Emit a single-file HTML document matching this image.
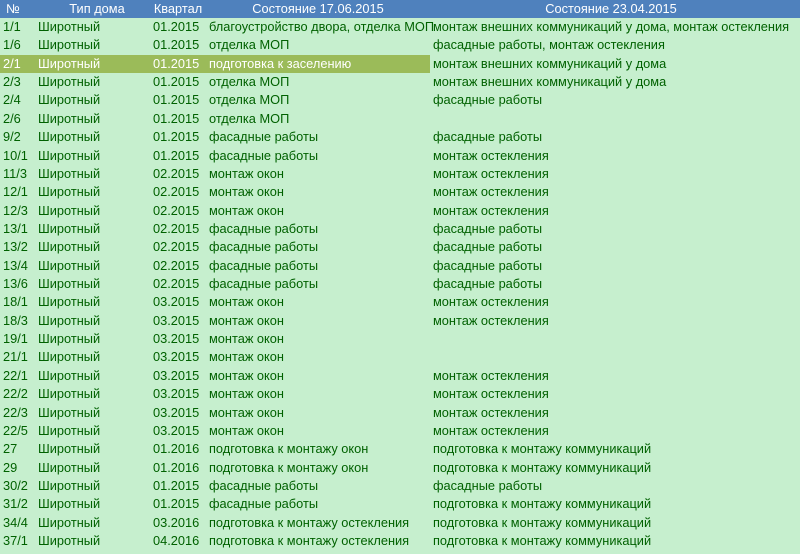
<!DOCTYPE html><html><head><meta charset="utf-8"><style>
body{margin:0;width:800px;height:554px;background:#c6efce;font-family:"Liberation Sans",sans-serif;font-size:12.8px;overflow:hidden;position:relative}
.h{position:absolute;left:0;top:0;width:800px;height:18px;background:#4f81bd;color:#fff}
.h span{position:absolute;top:1px;transform:translateX(-50%);white-space:nowrap}
.r{position:relative;height:18.36px;color:#006100;white-space:nowrap}
.r span{position:absolute;top:1px}
.c1{left:3px}.c2{left:38px}.c3{left:153px}.c4{left:209px}.c5{left:433px}
.hl{position:absolute;left:0;top:0;width:430px;height:18px;background:#9bbb59}
.hl~span{color:#fff}
#b{position:absolute;top:18px;left:0;width:800px}
</style></head><body>
<div class="h"><span style="left:13px">№</span><span style="left:97px">Тип дома</span><span style="left:178px">Квартал</span><span style="left:318px">Состояние 17.06.2015</span><span style="left:611px">Состояние 23.04.2015</span></div>
<div id="b">
<div class="r"><span class="c1">1/1</span><span class="c2">Широтный</span><span class="c3">01.2015</span><span class="c4">благоустройство двора, отделка МОП</span><span class="c5">монтаж внешних коммуникаций у дома, монтаж остекления</span></div>
<div class="r"><span class="c1">1/6</span><span class="c2">Широтный</span><span class="c3">01.2015</span><span class="c4">отделка МОП</span><span class="c5">фасадные работы, монтаж остекления</span></div>
<div class="r"><div class="hl"></div><span class="c1">2/1</span><span class="c2">Широтный</span><span class="c3">01.2015</span><span class="c4">подготовка к заселению</span><span class="c5" style="color:#006100">монтаж внешних коммуникаций у дома</span></div>
<div class="r"><span class="c1">2/3</span><span class="c2">Широтный</span><span class="c3">01.2015</span><span class="c4">отделка МОП</span><span class="c5">монтаж внешних коммуникаций у дома</span></div>
<div class="r"><span class="c1">2/4</span><span class="c2">Широтный</span><span class="c3">01.2015</span><span class="c4">отделка МОП</span><span class="c5">фасадные работы</span></div>
<div class="r"><span class="c1">2/6</span><span class="c2">Широтный</span><span class="c3">01.2015</span><span class="c4">отделка МОП</span></div>
<div class="r"><span class="c1">9/2</span><span class="c2">Широтный</span><span class="c3">01.2015</span><span class="c4">фасадные работы</span><span class="c5">фасадные работы</span></div>
<div class="r"><span class="c1">10/1</span><span class="c2">Широтный</span><span class="c3">01.2015</span><span class="c4">фасадные работы</span><span class="c5">монтаж остекления</span></div>
<div class="r"><span class="c1">11/3</span><span class="c2">Широтный</span><span class="c3">02.2015</span><span class="c4">монтаж окон</span><span class="c5">монтаж остекления</span></div>
<div class="r"><span class="c1">12/1</span><span class="c2">Широтный</span><span class="c3">02.2015</span><span class="c4">монтаж окон</span><span class="c5">монтаж остекления</span></div>
<div class="r"><span class="c1">12/3</span><span class="c2">Широтный</span><span class="c3">02.2015</span><span class="c4">монтаж окон</span><span class="c5">монтаж остекления</span></div>
<div class="r"><span class="c1">13/1</span><span class="c2">Широтный</span><span class="c3">02.2015</span><span class="c4">фасадные работы</span><span class="c5">фасадные работы</span></div>
<div class="r"><span class="c1">13/2</span><span class="c2">Широтный</span><span class="c3">02.2015</span><span class="c4">фасадные работы</span><span class="c5">фасадные работы</span></div>
<div class="r"><span class="c1">13/4</span><span class="c2">Широтный</span><span class="c3">02.2015</span><span class="c4">фасадные работы</span><span class="c5">фасадные работы</span></div>
<div class="r"><span class="c1">13/6</span><span class="c2">Широтный</span><span class="c3">02.2015</span><span class="c4">фасадные работы</span><span class="c5">фасадные работы</span></div>
<div class="r"><span class="c1">18/1</span><span class="c2">Широтный</span><span class="c3">03.2015</span><span class="c4">монтаж окон</span><span class="c5">монтаж остекления</span></div>
<div class="r"><span class="c1">18/3</span><span class="c2">Широтный</span><span class="c3">03.2015</span><span class="c4">монтаж окон</span><span class="c5">монтаж остекления</span></div>
<div class="r"><span class="c1">19/1</span><span class="c2">Широтный</span><span class="c3">03.2015</span><span class="c4">монтаж окон</span></div>
<div class="r"><span class="c1">21/1</span><span class="c2">Широтный</span><span class="c3">03.2015</span><span class="c4">монтаж окон</span></div>
<div class="r"><span class="c1">22/1</span><span class="c2">Широтный</span><span class="c3">03.2015</span><span class="c4">монтаж окон</span><span class="c5">монтаж остекления</span></div>
<div class="r"><span class="c1">22/2</span><span class="c2">Широтный</span><span class="c3">03.2015</span><span class="c4">монтаж окон</span><span class="c5">монтаж остекления</span></div>
<div class="r"><span class="c1">22/3</span><span class="c2">Широтный</span><span class="c3">03.2015</span><span class="c4">монтаж окон</span><span class="c5">монтаж остекления</span></div>
<div class="r"><span class="c1">22/5</span><span class="c2">Широтный</span><span class="c3">03.2015</span><span class="c4">монтаж окон</span><span class="c5">монтаж остекления</span></div>
<div class="r"><span class="c1">27</span><span class="c2">Широтный</span><span class="c3">01.2016</span><span class="c4">подготовка к монтажу окон</span><span class="c5">подготовка к монтажу коммуникаций</span></div>
<div class="r"><span class="c1">29</span><span class="c2">Широтный</span><span class="c3">01.2016</span><span class="c4">подготовка к монтажу окон</span><span class="c5">подготовка к монтажу коммуникаций</span></div>
<div class="r"><span class="c1">30/2</span><span class="c2">Широтный</span><span class="c3">01.2015</span><span class="c4">фасадные работы</span><span class="c5">фасадные работы</span></div>
<div class="r"><span class="c1">31/2</span><span class="c2">Широтный</span><span class="c3">01.2015</span><span class="c4">фасадные работы</span><span class="c5">подготовка к монтажу коммуникаций</span></div>
<div class="r"><span class="c1">34/4</span><span class="c2">Широтный</span><span class="c3">03.2016</span><span class="c4">подготовка к монтажу остекления</span><span class="c5">подготовка к монтажу коммуникаций</span></div>
<div class="r"><span class="c1">37/1</span><span class="c2">Широтный</span><span class="c3">04.2016</span><span class="c4">подготовка к монтажу остекления</span><span class="c5">подготовка к монтажу коммуникаций</span></div>
</div>
</body></html>
